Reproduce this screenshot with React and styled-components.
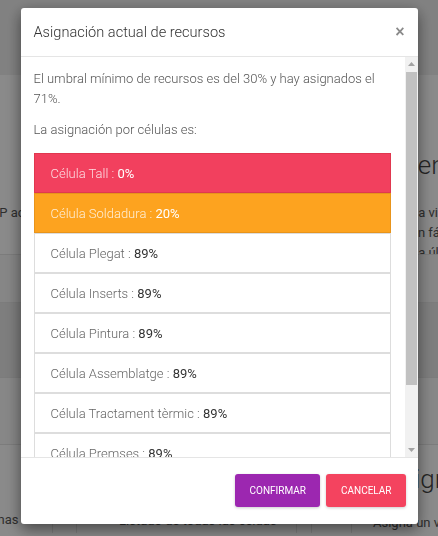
import React from "react";
import styled, { createGlobalStyle } from "styled-components";

const Global = createGlobalStyle`
  html, body { margin: 0; padding: 0; }
  body {
    font-family: Roboto, "Noto Sans", "Liberation Sans", sans-serif;
    background: #ffffff;
    width: 438px;
    height: 536px;
    overflow: hidden;
  }
  * { box-sizing: border-box; }
`;

/* ---------- page behind the modal ---------- */
const Page = styled.div`
  width: 438px;
  height: 536px;
  display: flex;
  flex-direction: column;
  background: #fafafa;
  color: #555;
  font-size: 13px;
  overflow: hidden;
`;

const TopBar = styled.div`
  height: 75px;
  background: #ececec;
  flex: none;
`;

const CardRow = styled.div`
  display: grid;
  grid-template-columns: 150px 1fr 150px;
  height: ${(p) => p.$h}px;
  background: ${(p) => p.$bg};
  border-bottom: 1px solid #e2e2e2;
  flex: none;
`;

const Cell = styled.div`
  display: flex;
  flex-direction: column;
  padding-top: ${(p) => p.$pt || 0}px;
  overflow: hidden;
  white-space: nowrap;
`;

const BgHeading = styled.div`
  font-size: 26px;
  font-weight: 300;
  color: #444;
  line-height: 30px;
  margin-bottom: ${(p) => p.$mb || 0}px;
  margin-left: ${(p) => p.$off || 0}px;
`;

const BgLine = styled.div`
  line-height: 20px;
  color: #555;
  margin-left: ${(p) => p.$off || 0}px;
`;

const BottomRow = styled.div`
  flex: 1;
  display: grid;
  grid-template-columns: 53px 24px 220px 15px 40px 1fr;
  align-items: end;
  background: #fbfbfb;
  padding-bottom: 3px;
`;

const BottomCell = styled.div`
  height: 26px;
  display: flex;
  align-items: center;
  border-right: 1px solid #e2e2e2;
  white-space: nowrap;
  padding-left: ${(p) => p.$pl || 0}px;
  color: #555;
`;

const BottomLast = styled.div`
  display: flex;
  flex-direction: column;
  white-space: nowrap;
  overflow: hidden;
  padding-left: 21px;
`;

/* ---------- overlay + modal ---------- */
const Overlay = styled.div`
  position: fixed;
  inset: 0;
  background: rgba(0, 0, 0, 0.45);
  display: flex;
  justify-content: center;
  align-items: flex-start;
  padding-top: 8px;
`;

const Modal = styled.div`
  width: 397px;
  height: 516px;
  background: #fff;
  border-radius: 3px;
  box-shadow: 0 5px 15px rgba(0, 0, 0, 0.5);
  display: flex;
  flex-direction: column;
  overflow: hidden;
`;

const Header = styled.div`
  height: 49px;
  flex: none;
  display: flex;
  align-items: center;
  justify-content: space-between;
  padding: 0 13px 0 13px;
  border-bottom: 1px solid #e5e5e5;
`;

const Title = styled.h4`
  margin: 0;
  font-size: 14.6px;
  font-weight: 300;
  color: #333;
`;

const Close = styled.button`
  border: none;
  background: none;
  padding: 0;
  font-family: "Liberation Sans", Arial, sans-serif;
  font-size: 16px;
  font-weight: 700;
  line-height: 1;
  color: #8a8a8a;
  cursor: pointer;
`;

const BodyWrap = styled.div`
  flex: 1;
  min-height: 0;
  display: flex;
`;

const Body = styled.div`
  flex: 1;
  min-width: 0;
  overflow: hidden;
  padding: 12px 14px 15px 13px;
`;

const ScrollBar = styled.div`
  width: 13px;
  flex: none;
  display: flex;
  flex-direction: column;
  background: #f1f1f1;
`;

const ScrollButton = styled.div`
  height: 14px;
  flex: none;
  display: flex;
  align-items: center;
  justify-content: center;
`;

const Track = styled.div`
  flex: 1;
  padding: 1px 1px 0;
`;

const Thumb = styled.div`
  height: 313px;
  background: #c1c1c1;
`;

const Text = styled.p`
  margin: 0 0 ${(p) => p.$mb}px;
  font-size: 13px;
  font-weight: 300;
  line-height: 20px;
  color: #555;
`;

const List = styled.ul`
  list-style: none;
  margin: 0;
  padding: 0;
`;

const tones = {
  danger: { bg: "#f2405e", border: "#e0384f", label: "rgba(255,255,255,0.82)", value: "#fff" },
  warning: { bg: "#fda31f", border: "#e8941b", label: "rgba(255,255,255,0.82)", value: "#fff" },
  normal: { bg: "#fff", border: "#dddddd", label: "#666", value: "#333" },
};

const Item = styled.li`
  height: 40px;
  display: flex;
  align-items: center;
  padding: 0 16px;
  font-size: 13px;
  font-weight: 300;
  background: ${(p) => tones[p.$tone].bg};
  border: 1px solid ${(p) => tones[p.$tone].border};
  color: ${(p) => tones[p.$tone].label};
  white-space: pre;
`;

const Value = styled.span`
  font-weight: 400;
  color: ${(p) => tones[p.$tone].value};
`;

const Footer = styled.div`
  height: 67px;
  flex: none;
  border-top: 1px solid #e5e5e5;
  display: flex;
  justify-content: flex-end;
  align-items: flex-start;
  gap: 6px;
  padding: 16px 12px 0 0;
`;

const Button = styled.button`
  height: 33px;
  padding: 0 14px 0 15px;
  border: none;
  border-radius: 3px;
  font-family: Roboto, "Noto Sans", sans-serif;
  font-size: 10px;
  font-weight: 400;
  color: #fff;
  background: ${(p) => p.$bg};
  box-shadow: 0 1px 3px rgba(0, 0, 0, 0.2);
  cursor: pointer;
`;

const Arrow = ({ down }) => (
  <svg width="7" height="4" viewBox="0 0 7 4">
    <path d={down ? "M0 0H7L3.5 4Z" : "M0 4H7L3.5 0Z"} fill="#a3a3a3" />
  </svg>
);

const cells = [
  { name: "Tall", value: 0 },
  { name: "Soldadura", value: 20 },
  { name: "Plegat", value: 89 },
  { name: "Inserts", value: 89 },
  { name: "Pintura", value: 89 },
  { name: "Assemblatge", value: 89 },
  { name: "Tractament tèrmic", value: 89 },
  { name: "Premses", value: 89 },
  { name: "Muntatge", value: 89 },
];

const toneFor = (v) => (v < 10 ? "danger" : v < 30 ? "warning" : "normal");

export default function App() {
  return (
    <>
      <Global />
      <Page>
        <TopBar />
        <CardRow $h={180} $bg="#fbfbfb">
          <Cell $pt={128}>
            <BgLine $off={-17}>KPP actual</BgLine>
          </Cell>
          <Cell />
          <Cell $pt={75}>
            <BgHeading $off={112} $mb={23}>Generales</BgHeading>
            <BgLine $off={127}>la visualización</BgLine>
            <BgLine $off={123}>en fácil acceso</BgLine>
            <BgLine $off={127}>la última hora</BgLine>
          </Cell>
        </CardRow>
        <CardRow $h={48} $bg="#f4f4f4" />
        <CardRow $h={75} $bg="#e6e6e6" />
        <CardRow $h={67} $bg="#f6f6f6" />
        <BottomRow>
          <BottomCell>
            <BgLine $off={-40}>Columnas</BgLine>
          </BottomCell>
          <BottomCell />
          <BottomCell $pl={42}>Listado de todas las celdas</BottomCell>
          <BottomCell />
          <BottomCell />
          <BottomLast>
            <BgHeading $off={12} $mb={19}>Asignación</BgHeading>
            <BgLine>Asigna un valor</BgLine>
          </BottomLast>
        </BottomRow>
      </Page>

      <Overlay>
        <Modal>
          <Header>
            <Title>Asignación actual de recursos</Title>
            <Close aria-label="Cerrar">×</Close>
          </Header>
          <BodyWrap>
            <Body>
              <Text $mb={11}>
                El umbral mínimo de recursos es del 30% y hay asignados el 71%.
              </Text>
              <Text $mb={13}>La asignación por células es:</Text>
              <List>
                {cells.map((c) => {
                  const t = toneFor(c.value);
                  return (
                    <Item key={c.name} $tone={t}>
                      {`Célula ${c.name} : `}
                      <Value $tone={t}>{c.value}%</Value>
                    </Item>
                  );
                })}
              </List>
            </Body>
            <ScrollBar>
              <ScrollButton>
                <Arrow />
              </ScrollButton>
              <Track>
                <Thumb />
              </Track>
              <ScrollButton>
                <Arrow down />
              </ScrollButton>
            </ScrollBar>
          </BodyWrap>
          <Footer>
            <Button $bg="#9c27b0">CONFIRMAR</Button>
            <Button $bg="#f4435f">CANCELAR</Button>
          </Footer>
        </Modal>
      </Overlay>
    </>
  );
}
